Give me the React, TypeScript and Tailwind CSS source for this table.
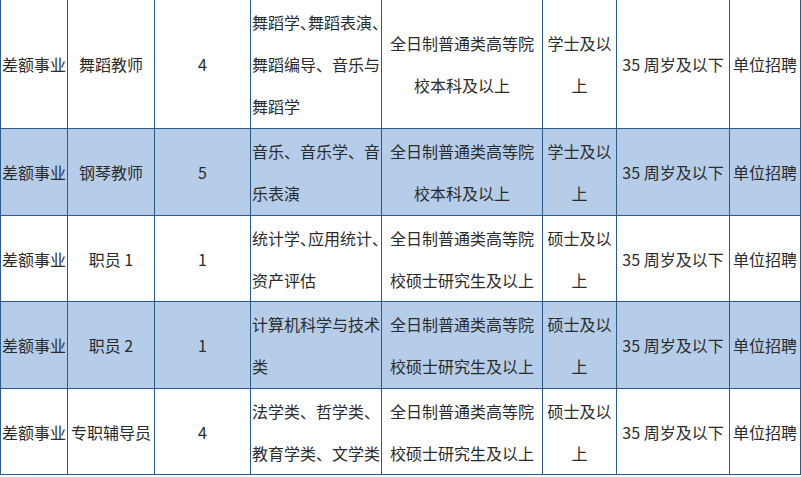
import React from "react";

type Row = {
  blue: boolean;
  type: string;
  job: string;
  num: string;
  major: React.ReactNode[];
  edu: string[];
  deg: string[];
  age: string;
  way: string;
};

const H = ({ children }: { children: React.ReactNode }) => (
  <span className="[font-feature-settings:'halt']">{children}</span>
);

const rows: Row[] = [
  {
    blue: false,
    type: "差额事业",
    job: "舞蹈教师",
    num: "4",
    major: [
      <>舞蹈学<H>、</H>舞蹈表演<H>、</H></>,
      <>舞蹈编导、音乐与</>,
      <>舞蹈学</>,
    ],
    edu: ["全日制普通类高等院", "校本科及以上"],
    deg: ["学士及以", "上"],
    age: "35 周岁及以下",
    way: "单位招聘",
  },
  {
    blue: true,
    type: "差额事业",
    job: "钢琴教师",
    num: "5",
    major: [<>音乐、音乐学、音</>, <>乐表演</>],
    edu: ["全日制普通类高等院", "校本科及以上"],
    deg: ["学士及以", "上"],
    age: "35 周岁及以下",
    way: "单位招聘",
  },
  {
    blue: false,
    type: "差额事业",
    job: "职员 1",
    num: "1",
    major: [<>统计学<H>、</H>应用统计<H>、</H></>, <>资产评估</>],
    edu: ["全日制普通类高等院", "校硕士研究生及以上"],
    deg: ["硕士及以", "上"],
    age: "35 周岁及以下",
    way: "单位招聘",
  },
  {
    blue: true,
    type: "差额事业",
    job: "职员 2",
    num: "1",
    major: [<>计算机科学与技术</>, <>类</>],
    edu: ["全日制普通类高等院", "校硕士研究生及以上"],
    deg: ["硕士及以", "上"],
    age: "35 周岁及以下",
    way: "单位招聘",
  },
  {
    blue: false,
    type: "差额事业",
    job: "专职辅导员",
    num: "4",
    major: [<>法学类、哲学类、</>, <>教育学类、文学类</>],
    edu: ["全日制普通类高等院", "校硕士研究生及以上"],
    deg: ["硕士及以", "上"],
    age: "35 周岁及以下",
    way: "单位招聘",
  },
];

function Cell({
  blue,
  left,
  children,
}: {
  blue: boolean;
  left?: boolean;
  children: React.ReactNode;
}) {
  return (
    <div
      className={`${blue ? "bg-[#b5cde9]" : "bg-white"} flex flex-col justify-center ${
        left ? "items-start pl-[1px]" : "items-center"
      } whitespace-nowrap overflow-hidden`}
    >
      {children}
    </div>
  );
}

export default function App() {
  return (
    <div className="w-[801px] h-[477px] bg-white overflow-hidden text-[16px] leading-[42px] text-[#2b2b2b] [font-family:'Noto_Sans_CJK_SC','Microsoft_YaHei',sans-serif]">
      <div className="grid grid-cols-[66px_86px_95px_130px_160px_73px_112px_70px] grid-rows-[128px_86px_85px_86px_85px] gap-px bg-[#2d5a88] px-px pb-px w-[801px]">
        {rows.map((r, i) => (
          <React.Fragment key={i}>
            <Cell blue={r.blue}>
              <span>{r.type}</span>
            </Cell>
            <Cell blue={r.blue}>
              <span>{r.job}</span>
            </Cell>
            <Cell blue={r.blue}>
              <span>{r.num}</span>
            </Cell>
            <Cell blue={r.blue} left>
              {r.major.map((m, j) => (
                <span key={j}>{m}</span>
              ))}
            </Cell>
            <Cell blue={r.blue}>
              {r.edu.map((m, j) => (
                <span key={j}>{m}</span>
              ))}
            </Cell>
            <Cell blue={r.blue}>
              {r.deg.map((m, j) => (
                <span key={j}>{m}</span>
              ))}
            </Cell>
            <Cell blue={r.blue}>
              <span>{r.age}</span>
            </Cell>
            <Cell blue={r.blue}>
              <span>{r.way}</span>
            </Cell>
          </React.Fragment>
        ))}
      </div>
    </div>
  );
}
